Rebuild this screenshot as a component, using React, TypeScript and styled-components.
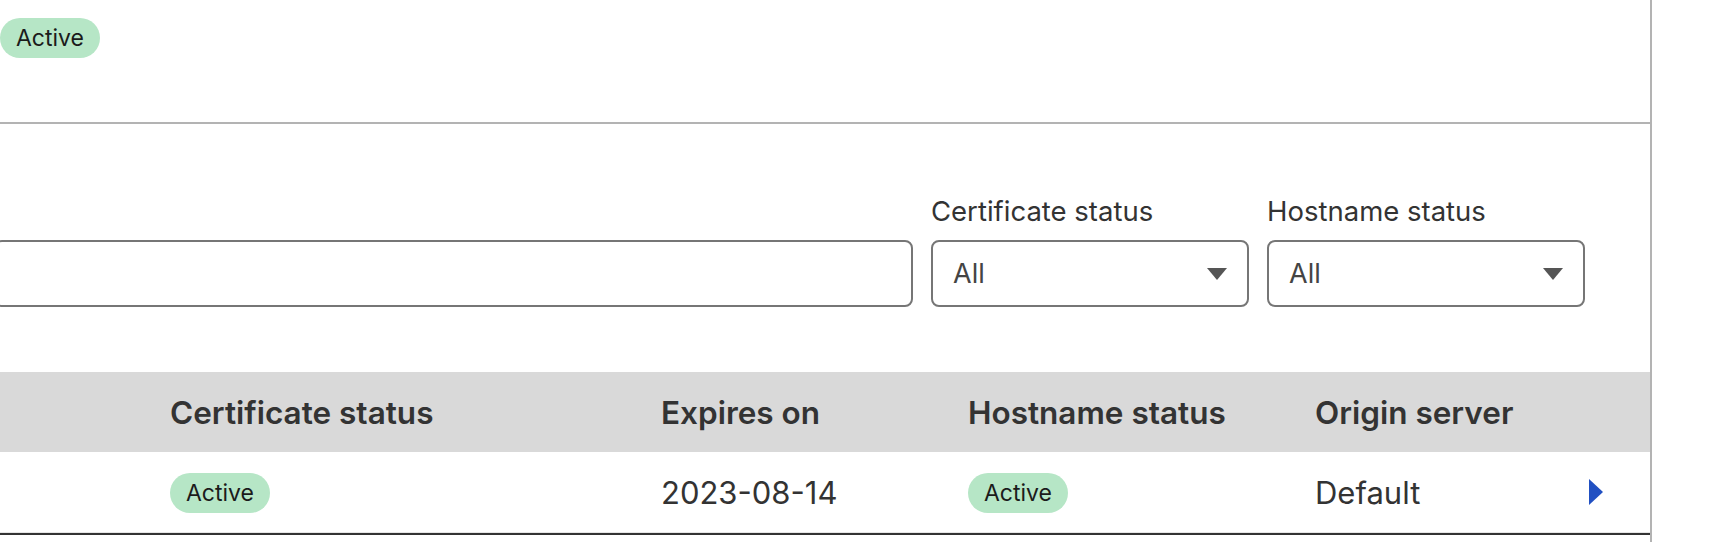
import styled, { createGlobalStyle } from 'styled-components'

type Row = {
  certificate: string
  expires: string
  hostname: string
  origin: string
}

const rows: Row[] = [
  { certificate: 'Active', expires: '2023-08-14', hostname: 'Active', origin: 'Default' },
]

const columns = '170px 491px 307px 347px 1fr 90px'

export default function App() {
  return (
    <>
      <GlobalStyle />
      <Page>
        <Panel>
          <Summary>
            <Badge>Active</Badge>
          </Summary>

          <Filters>
            <SearchInput type='text' aria-label='Search' />
            <Field>
              <Label>Certificate status</Label>
              <Select>
                <span>All</span>
                <Caret />
              </Select>
            </Field>
            <Field>
              <Label>Hostname status</Label>
              <Select>
                <span>All</span>
                <Caret />
              </Select>
            </Field>
          </Filters>

          <Table>
            <HeadRow>
              <span />
              <span>Certificate status</span>
              <span>Expires on</span>
              <span>Hostname status</span>
              <span>Origin server</span>
              <span />
            </HeadRow>
            {rows.map((row) => (
              <BodyRow key={row.expires}>
                <span />
                <span><Badge>{row.certificate}</Badge></span>
                <span>{row.expires}</span>
                <span><Badge>{row.hostname}</Badge></span>
                <span>{row.origin}</span>
                <Expand aria-label='Expand row'>
                  <svg width='14' height='26' viewBox='0 0 14 26'>
                    <path d='M0 0 L14 13 L0 26 Z' fill='#2150c2' />
                  </svg>
                </Expand>
              </BodyRow>
            ))}
          </Table>
        </Panel>
        <Side />
      </Page>
    </>
  )
}

const GlobalStyle = createGlobalStyle`
  html, body {
    margin: 0;
    background: #fff;
  }
  body {
    font-family: Inter, 'Open Sans', sans-serif;
    color: #333;
  }
`

const Page = styled.div`
  display: flex;
  width: 1710px;
  height: 542px;
  overflow: hidden;
`

const Panel = styled.main`
  width: 1650px;
  flex-shrink: 0;
  border-right: 2px solid #b3b3b3;
  overflow: hidden;
`

const Side = styled.aside`
  flex: 1;
  background: #fff;
`

const Summary = styled.section`
  height: 104px;
  padding-top: 18px;
  border-bottom: 2px solid #b3b3b3;
`

const Badge = styled.span`
  display: inline-flex;
  align-items: center;
  height: 40px;
  padding: 0 16px;
  border-radius: 20px;
  background: #b6e6c6;
  color: #1b1b1b;
  font-size: 23px;
  box-sizing: border-box;
`

const Filters = styled.div`
  display: flex;
  align-items: flex-end;
  gap: 18px;
  margin-left: -6px;
  padding: 68px 65px 0 0;
  height: 183px;
  box-sizing: border-box;
`

const SearchInput = styled.input`
  flex: 1;
  height: 67px;
  box-sizing: border-box;
  border: 2px solid #767676;
  border-radius: 8px;
  background: #fff;
  font: inherit;
`

const Field = styled.label`
  display: flex;
  flex-direction: column;
  gap: 13px;
  width: 318px;
  flex-shrink: 0;
`

const Label = styled.span`
  font-size: 27.5px;
  color: #333;
  line-height: 32px;
`

const Select = styled.div`
  display: flex;
  align-items: center;
  justify-content: space-between;
  height: 67px;
  box-sizing: border-box;
  padding: 0 20px;
  border: 2px solid #767676;
  border-radius: 8px;
  font-size: 27px;
  color: #444;
`

const Caret = styled.span`
  width: 0;
  height: 0;
  border-left: 10px solid transparent;
  border-right: 10px solid transparent;
  border-top: 12px solid #555;
`

const Table = styled.div`
  margin-top: 65px;
  border-bottom: 2px solid #333;
`

const HeadRow = styled.div`
  display: grid;
  grid-template-columns: ${columns};
  align-items: center;
  height: 80px;
  background: #d9d9d9;
  font-size: 31.5px;
  font-weight: 600;
  color: #333;
`

const BodyRow = styled.div`
  display: grid;
  grid-template-columns: ${columns};
  align-items: center;
  height: 80px;
  border-bottom: 1px solid #e6e6e6;
  font-size: 31px;
  color: #333;
`

const Expand = styled.span`
  display: flex;
  padding-left: 29px;
`
